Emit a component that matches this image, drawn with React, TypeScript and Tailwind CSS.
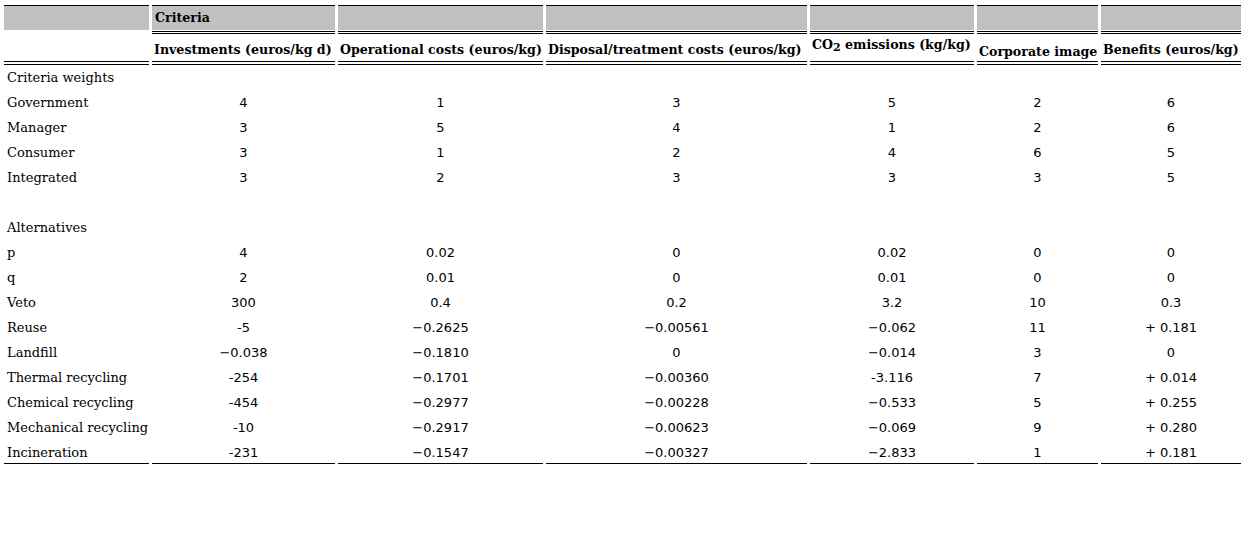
const cols = "grid grid-cols-[145px_183px_205px_261px_164px_121px_140px] gap-x-[3px]";

const headers = [
  { label: <>Investments (euros/kg d)</>, pos: "pb-[4px]" },
  { label: <>Operational costs (euros/kg)</>, pos: "pb-[4px]" },
  { label: <>Disposal/treatment costs (euros/kg)</>, pos: "pb-[4px]" },
  {
    label: (
      <>
        CO<sub className="relative top-[2px] text-[11px]">2</sub> emissions (kg/kg)
      </>
    ),
    pos: "pb-[9px]",
  },
  { label: <>Corporate image</>, pos: "pb-[2px]" },
  { label: <>Benefits (euros/kg)</>, pos: "pb-[4px]" },
];

const rows: (string | null)[][] = [
  ["Criteria weights"],
  ["Government", "4", "1", "3", "5", "2", "6"],
  ["Manager", "3", "5", "4", "1", "2", "6"],
  ["Consumer", "3", "1", "2", "4", "6", "5"],
  ["Integrated", "3", "2", "3", "3", "3", "5"],
  [""],
  ["Alternatives"],
  ["p", "4", "0.02", "0", "0.02", "0", "0"],
  ["q", "2", "0.01", "0", "0.01", "0", "0"],
  ["Veto", "300", "0.4", "0.2", "3.2", "10", "0.3"],
  ["Reuse", "-5", "\u22120.2625", "\u22120.00561", "\u22120.062", "11", "+ 0.181"],
  ["Landfill", "\u22120.038", "\u22120.1810", "0", "\u22120.014", "3", "0"],
  ["Thermal recycling", "-254", "\u22120.1701", "\u22120.00360", "-3.116", "7", "+ 0.014"],
  ["Chemical recycling", "-454", "\u22120.2977", "\u22120.00228", "\u22120.533", "5", "+ 0.255"],
  ["Mechanical recycling", "-10", "\u22120.2917", "\u22120.00623", "\u22120.069", "9", "+ 0.280"],
  ["Incineration", "-231", "\u22120.1547", "\u22120.00327", "\u22122.833", "1", "+ 0.181"],
];

const serif = "font-['DejaVu_Serif',serif]";
const sans = "font-['DejaVu_Sans',sans-serif]";

export default function App() {
  return (
    <div className="min-h-[538px] w-[1247px] bg-white text-black pl-[4px] pt-[5px]">
      {/* top header band */}
      <div className={cols}>
        <div className="h-[25px] border-t border-black bg-[#c0c0c0]" />
        <div className={`h-[25px] border-t border-black bg-[#c0c0c0] pl-[3px] text-[12.6px] font-bold leading-[24px] ${serif}`}>
          Criteria
        </div>
        {[0, 1, 2, 3, 4].map((i) => (
          <div key={i} className="h-[25px] border-t border-black bg-[#c0c0c0]" />
        ))}
      </div>

      {/* column headings */}
      <div className={`${cols} mt-px`}>
        <div className="h-[34px] border-t-[3px] border-b-4 border-double border-t-transparent border-b-black" />
        {headers.map((h, i) => (
          <div
            key={i}
            className={`flex h-[34px] items-end whitespace-nowrap border-y-[3px] border-b-4 border-double border-black pl-[2px] text-[12.6px] font-bold leading-[14px] ${serif} ${h.pos}`}
          >
            <span>{h.label}</span>
          </div>
        ))}
      </div>

      {/* body */}
      {rows.map((r, ri) => {
        const last = ri === rows.length - 1;
        const cell = last ? "h-[24px] border-b border-black leading-[25px]" : "h-[25px] leading-[25px]";
        return (
          <div key={ri} className={cols}>
            <div className={`${cell} whitespace-nowrap pl-[3px] text-[13px] ${serif}`}>{r[0]}</div>
            {[1, 2, 3, 4, 5, 6].map((c) => (
              <div key={c} className={`${cell} text-center text-[13px] ${sans}`}>
                {r[c] ?? ""}
              </div>
            ))}
          </div>
        );
      })}
    </div>
  );
}
